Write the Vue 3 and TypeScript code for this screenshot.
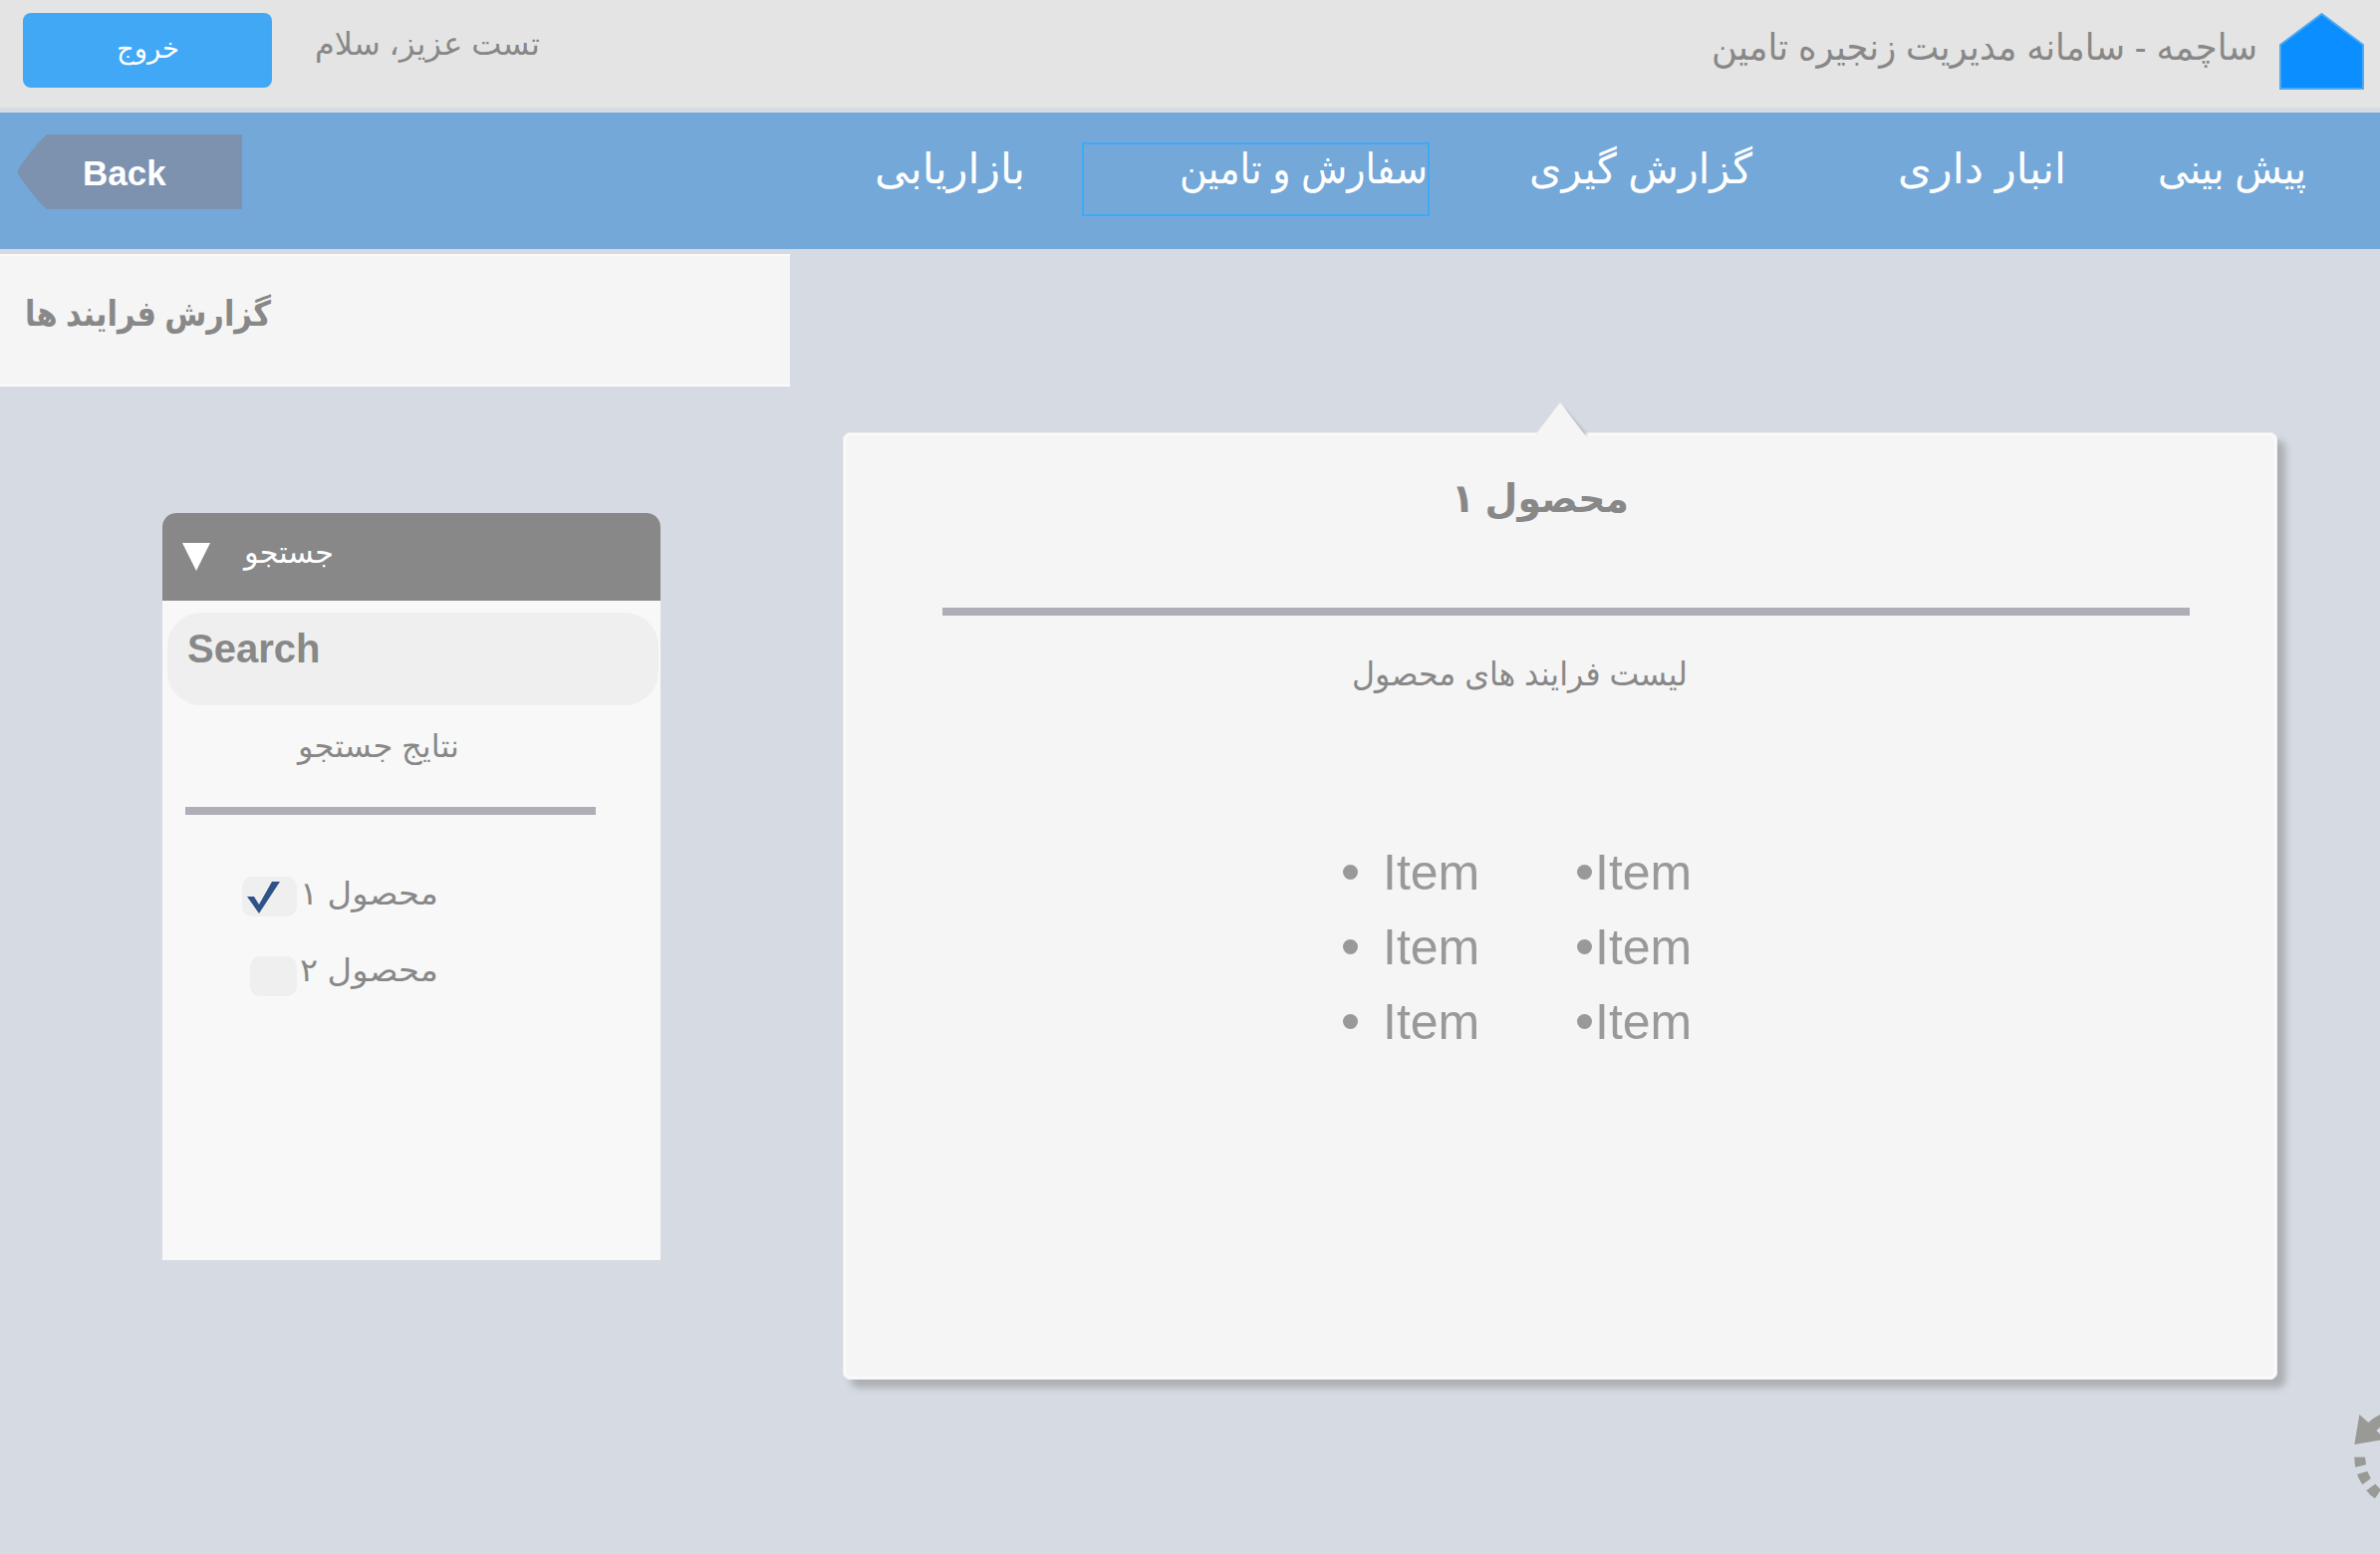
<script setup lang="ts">
import { h, ref } from 'vue'
import type { FunctionalComponent } from 'vue'

interface FaTextProps {
  text: string
  width: number
  base: number
  size: number
  bold?: boolean
}

// A right-to-left label fitted to a fixed width; its baseline is the bottom edge of the box.
const FaText: FunctionalComponent<FaTextProps> = (p) =>
  h('svg', { width: p.width, height: p.base, style: { display: 'block', overflow: 'visible', flex: 'none' } }, [
    h(
      'text',
      {
        x: p.width,
        y: p.base,
        direction: 'rtl',
        'text-anchor': 'start',
        textLength: p.width,
        lengthAdjust: 'spacingAndGlyphs',
        fill: 'currentColor',
        'font-size': p.size,
        'font-weight': p.bold ? 700 : 400,
      },
      p.text,
    ),
  ])
FaText.props = ['text', 'width', 'base', 'size', 'bold']

const menu = [
  { text: 'بازاریابی', width: 151, cls: 'marketing' },
  { text: 'سفارش و تامین', width: 249, cls: 'orders' },
  { text: 'گزارش گیری', width: 224, cls: 'reports' },
  { text: 'انبار داری', width: 169, cls: 'stock' },
  { text: 'پیش بینی', width: 149, cls: 'forecast' },
]

const products = ref([
  { text: 'محصول ۱', checked: true },
  { text: 'محصول ۲', checked: false },
])
const columns = [
  ['Item', 'Item', 'Item'],
  ['Item', 'Item', 'Item'],
]
</script>

<template>
  <div class="page">
    <header class="top">
      <button class="logout"><FaText text="خروج" :width="63" :base="45" :size="28" /></button>
      <FaText class="greeting" text="تست عزیز، سلام" :width="226" :base="55" :size="32" />
      <FaText class="brand" text="ساچمه - سامانه مدیریت زنجیره تامین" :width="548" :base="60" :size="37" />
      <svg class="home" width="85" height="77" viewBox="0 0 85 77">
        <path d="M1 32 42.5 1 84 32V76H1Z" fill="#0b8eff" stroke="#4fa9f1" stroke-width="2" />
      </svg>
    </header>

    <nav class="bar">
      <button class="back">
        <svg class="back-shape" width="225" height="75" viewBox="0 0 225 75">
          <path d="M29 0H225V75H29C23 71 6 49 1 41Q-1 37 1 34C6 26 23 4 29 0Z" fill="#7c92af" />
        </svg>
        <span>Back</span>
      </button>
      <a v-for="m in menu" :key="m.cls" :class="['link', m.cls]">
        <FaText :text="m.text" :width="m.width" :base="m.cls === 'orders' ? 39 : 41" :size="42" />
      </a>
    </nav>

    <main class="content">
      <section class="left">
        <div class="heading"><FaText text="گزارش فرایند ها" :width="247" :base="72" :size="35" :bold="true" /></div>
        <div class="panel">
          <div class="panel-head">
            <svg width="28" height="28" viewBox="0 0 28 28"><path d="M0 0H28L14 28Z" fill="#fff" /></svg>
            <FaText text="جستجو" :width="90" :base="50" :size="31" />
          </div>
          <div class="field">Search</div>
          <FaText class="results" text="نتایج جستجو" :width="162" :base="52" :size="32" />
          <div class="rule"></div>
          <ul class="products">
            <li v-for="p in products" :key="p.text" @click="p.checked = !p.checked">
              <span :class="['box', { on: p.checked }]">
                <svg v-if="p.checked" width="33" height="34" viewBox="0 0 33 34">
                  <path d="M0 16H7L12 24 25 1H33L12 33Z" fill="#2f5288" />
                </svg>
              </span>
              <FaText :text="p.text" :width="139" :base="28" :size="32" />
            </li>
          </ul>
        </div>
      </section>

      <section class="card">
        <svg class="pointer" width="60" height="34" viewBox="0 0 60 34">
          <defs>
            <filter id="soft" x="-20%" y="-20%" width="140%" height="140%">
              <feGaussianBlur stdDeviation="1.5" />
            </filter>
          </defs>
          <path d="M30 5 54 33H35Z" fill="#b6babf" filter="url(#soft)" />
          <path d="M26 0 52 34H0Z" fill="#f5f5f5" />
        </svg>
        <FaText class="card-title" text="محصول ۱" :width="178" :base="78" :size="40" :bold="true" />
        <div class="card-rule"></div>
        <FaText class="card-sub" text="لیست فرایند های محصول" :width="337" :base="70" :size="33" />
        <div class="lists">
          <ul v-for="(c, i) in columns" :key="i">
            <li v-for="(item, j) in c" :key="j"><i></i><span>{{ item }}</span></li>
          </ul>
        </div>
      </section>
    </main>

    <footer class="foot">
      <svg width="29" height="89" viewBox="600 231 87 267" fill="#999996">
        <path d="M625 240 652 264Q668 249 687 240V278L676 288 687 299V317L610 330Z" />
        <path d="M610 368H642L645 391 613 399Q610 384 610 368ZM618 420 649 411 659 433 634 451Q624 437 618 420ZM646 469 673 449 687 464V470L672 493Q657 484 646 469Z" />
      </svg>
    </footer>
  </div>
</template>

<style>
body {
  background: #d6dae2;
}
</style>

<style scoped>
.page {
  display: flex;
  flex-direction: column;
  width: 2389px;
  height: 1560px;
  overflow: hidden;
  background: #d6dae2;
  color: #888;
  font-family: "Liberation Sans", "DejaVu Sans", sans-serif;
}
button {
  border: 0;
  padding: 0;
  background: none;
  color: #fff;
  font-family: inherit;
}
ul {
  list-style: none;
  margin: 0;
  padding: 0;
}
.top {
  display: flex;
  align-items: flex-start;
  box-sizing: border-box;
  height: 108px;
  padding: 0 16px 0 23px;
  background: #e4e4e4;
}
.logout {
  display: flex;
  align-items: flex-start;
  box-sizing: border-box;
  width: 250px;
  height: 75px;
  margin-top: 13px;
  padding-left: 94px;
  border-radius: 8px;
  background: #41a8f6;
}
.greeting {
  margin-left: 43px;
}
.brand {
  margin-left: auto;
}
.home {
  margin: 13px 0 0 22px;
}
.bar {
  display: flex;
  align-items: flex-start;
  height: 137px;
  margin-top: 5px;
  padding-left: 18px;
  background: #73a8d9;
  color: #fff;
}
.back {
  display: grid;
  width: 225px;
  height: 75px;
  margin-top: 22px;
}
.back-shape,
.back span {
  grid-area: 1 / 1;
}
.back span {
  padding-left: 65px;
  text-align: left;
  font-size: 35px;
  font-weight: 700;
  line-height: 77px;
}
.link {
  display: flex;
  box-sizing: border-box;
  height: 74px;
  margin-top: 30px;
}
.marketing {
  margin-left: 635px;
}
.orders {
  justify-content: flex-end;
  width: 349px;
  margin-left: 57px;
  border: 2px solid #41a8f6;
}
.reports {
  margin-left: 100px;
}
.stock {
  margin-left: 146px;
}
.forecast {
  margin-left: 92px;
}
.content {
  display: flex;
  align-items: flex-start;
  margin-top: 5px;
}
.left {
  width: 846px;
}
.heading {
  box-sizing: border-box;
  width: 793px;
  height: 133px;
  padding-left: 25px;
  background: #f5f5f5;
  box-shadow: inset 0 2px #fbfbfb, inset 0 -2px #fbfbfb;
}
.panel {
  display: flex;
  flex-direction: column;
  width: 500px;
  height: 750px;
  margin: 127px 0 0 163px;
  border-radius: 14px 14px 0 0;
  background: #f8f8f8;
}
.panel-head {
  display: flex;
  box-sizing: border-box;
  height: 88px;
  padding-left: 20px;
  gap: 34px;
  border-radius: 14px 14px 0 0;
  background: #888;
  color: #fff;
}
.panel-head > svg:first-child {
  margin-top: 30px;
}
.field {
  box-sizing: border-box;
  height: 93px;
  margin: 12px 2px 0 5px;
  padding-left: 20px;
  border-radius: 34px;
  background: #efefef;
  font-size: 40px;
  font-weight: 700;
  line-height: 73px;
}
.results {
  margin-left: 136px;
}
.rule {
  width: 412px;
  height: 8px;
  margin: 50px 0 0 23px;
  background: #aeaeb7;
}
.products {
  margin: 62px 0 0 80px;
}
.products li {
  display: flex;
  width: 197px;
  height: 40px;
  margin-bottom: 40px;
  justify-content: flex-end;
  gap: 3px;
}
.products li + li > svg {
  margin-top: -3px;
}
.box {
  box-sizing: border-box;
  width: 47px;
  height: 40px;
  border-radius: 10px;
  background: #efefef;
}
.box.on {
  width: 55px;
  padding: 4px 0 0 5px;
}
.box svg {
  display: block;
}
.card {
  position: relative;
  box-sizing: border-box;
  width: 1440px;
  height: 951px;
  margin-top: 179px;
  border-radius: 8px;
  background: #f5f5f5;
  box-shadow: inset 0 0 0 1px #ebedef, inset 0 0 0 3px #fbfbfb, 8px 8px 7px rgba(60, 62, 58, 0.28);
}
.pointer {
  position: absolute;
  left: 694px;
  top: -30px;
}
.card-title {
  margin-left: 611px;
  padding-top: 2px;
}
.card-rule {
  width: 1252px;
  height: 8px;
  margin: 96px 0 0 100px;
  background: #aeaeb7;
}
.card-sub {
  margin-left: 511px;
}
.lists {
  display: flex;
  margin-top: 150px;
  padding-left: 502px;
  color: #999;
}
.lists ul {
  width: 235px;
}
.lists li {
  display: flex;
  align-items: center;
  height: 75px;
  font-size: 50px;
  line-height: 75px;
}
.lists span {
  padding-top: 2px;
}
.lists i {
  width: 15px;
  height: 15px;
  margin-right: 25px;
  border-radius: 50%;
  background: #999;
}
.lists ul + ul i {
  margin-right: 3px;
}
.foot {
  display: flex;
  justify-content: flex-end;
  margin-top: 32px;
}
</style>
